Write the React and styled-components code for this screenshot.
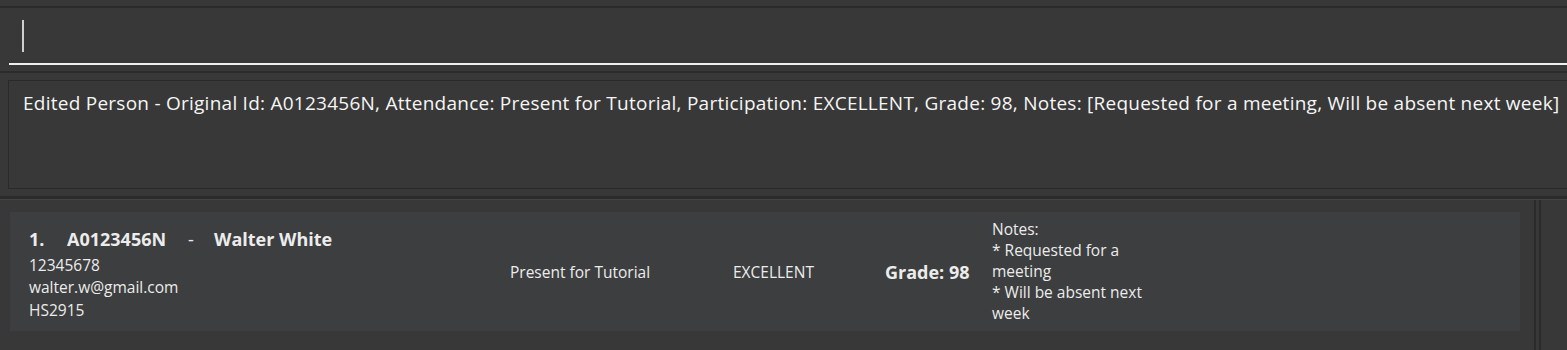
import React from 'react'
import styled, { createGlobalStyle } from 'styled-components'

const GlobalStyle = createGlobalStyle`
  html, body {
    margin: 0;
    padding: 0;
    background: #383838;
    font-family: "Open Sans", "Noto Sans", sans-serif;
    overflow: hidden;
  }
`

const Page = styled.div`
  width: 1567px;
  height: 350px;
  display: flex;
  flex-direction: column;
  background: #383838;
`

const Divider = styled.div`
  height: ${props => props.size || 2}px;
  background: #2b2b2b;
  border-bottom: ${props => (props.double ? '1px solid #444' : 'none')};
  margin-top: ${props => props.top || 0}px;
  flex-shrink: 0;
`

const CommandArea = styled.div`
  height: 57px;
  padding-left: 9px;
  display: flex;
  flex-shrink: 0;
`

const CommandField = styled.div`
  flex: 1;
  border-bottom: 2px solid #f0f0f0;
  display: flex;
  align-items: center;
  padding-left: 13px;
`

const Caret = styled.div`
  width: 1.5px;
  height: 32px;
  background: #cfcfcf;
`

const ResultArea = styled.div`
  margin: 7px 0 0 8px;
  height: 109px;
  flex-shrink: 0;
  border: 1px solid #2a2a2a;
  border-right: none;
  box-sizing: border-box;
  padding: 9px 14px;
  color: #f5f5f5;
  font-size: 19px;
  letter-spacing: 0.25px;
  white-space: nowrap;
`

const ListArea = styled.div`
  flex: 1;
  display: flex;
  padding-top: 12px;
`

const ListColumn = styled.div`
  flex: 1;
  padding-left: 10px;
`

const ScrollTrack = styled.div`
  width: 7px;
  margin-top: -12px;
  margin-right: 26px;
  border-left: 2px solid #2b2b2b;
  border-right: 2px solid #2b2b2b;
  box-sizing: border-box;
`

const Card = styled.div`
  width: 1510px;
  height: 119px;
  background: #3c3e3f;
  display: flex;
  align-items: center;
  color: #ececec;
  box-sizing: border-box;
  padding-left: 19px;
`

const InfoBlock = styled.div`
  width: 481px;
  display: flex;
  flex-direction: column;
  padding-top: 5px;
`

const TitleRow = styled.div`
  display: flex;
  font-weight: 700;
  font-size: 18px;
  line-height: 24px;
  margin-bottom: 3px;
`

const TitlePart = styled.span`
  width: ${props => props.w}px;
  flex-shrink: 0;
  font-weight: ${props => (props.light ? 400 : 700)};
`

const Line = styled.div`
  font-size: 15.5px;
  line-height: 22.5px;
`

const Cell = styled.div`
  width: ${props => props.w}px;
  font-size: ${props => (props.big ? '18px' : '15.5px')};
  font-weight: ${props => (props.big ? 700 : 400)};
  flex-shrink: 0;
`

const Notes = styled.div`
  width: 160px;
  font-size: 15.5px;
  line-height: 21px;
`

export default function App() {
  return (
    <Page>
      <GlobalStyle />
      <Divider size={2} top={6} />
      <CommandArea>
        <CommandField>
          <Caret />
        </CommandField>
      </CommandArea>
      <Divider size={2} top={6} />
      <ResultArea>
        Edited Person - Original Id: A0123456N, Attendance: Present for Tutorial, Participation: EXCELLENT, Grade: 98, Notes: [Requested for a meeting, Will be absent next week]
      </ResultArea>
      <Divider size={3} top={7} double />
      <ListArea>
        <ListColumn>
          <Card>
            <InfoBlock>
              <TitleRow>
                <TitlePart w={38}>1.</TitlePart>
                <TitlePart w={121}>A0123456N</TitlePart>
                <TitlePart w={26} light>-</TitlePart>
                <TitlePart w={150}>Walter White</TitlePart>
              </TitleRow>
              <Line>12345678</Line>
              <Line>walter.w@gmail.com</Line>
              <Line>HS2915</Line>
            </InfoBlock>
            <Cell w={223}>Present for Tutorial</Cell>
            <Cell w={152}>EXCELLENT</Cell>
            <Cell w={107} big>Grade: 98</Cell>
            <Notes>
              Notes:
              <br />* Requested for a meeting
              <br />* Will be absent next week
            </Notes>
          </Card>
        </ListColumn>
        <ScrollTrack />
      </ListArea>
    </Page>
  )
}
